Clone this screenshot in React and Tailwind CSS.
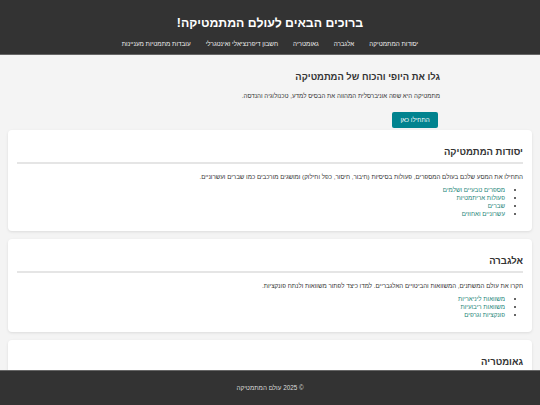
const sections = [
  {
    title: "יסודות המתמטיקה",
    text: "התחילו את המסע שלכם בעולם המספרים, פעולות בסיסיות (חיבור, חיסור, כפל וחילוק) ומושגים מורכבים כמו שברים ועשרוניים.",
    links: ["מספרים טבעיים ושלמים", "פעולות אריתמטיות", "שברים", "עשרוניים ואחוזים"],
  },
  {
    title: "אלגברה",
    text: "חקרו את עולם המשתנים, המשוואות והביטויים האלגבריים. למדו כיצד לפתור משוואות ולנתח פונקציות.",
    links: ["משוואות ליניאריות", "משוואות ריבועיות", "פונקציות וגרפים"],
  },
  {
    title: "גאומטריה",
    text: "גלו את עולם הצורות, הזוויות והמרחב.",
    links: ["משולשים", "מעגלים"],
  },
];

const nav = [
  "יסודות המתמטיקה",
  "אלגברה",
  "גאומטריה",
  "חשבון דיפרנציאלי ואינטגרלי",
  "עובדות מתמטיות מעניינות",
];

export default function App() {
  return (
    <div
      dir="rtl"
      className="min-h-screen bg-[#f4f4f4] text-[#333] font-['Liberation_Sans',Arial,sans-serif]"
    >
      <header className="bg-[#333] text-white border-b border-[#666] h-[55px] flex flex-col items-center">
        <h1 className="text-[12.3px] font-bold leading-[16px] mt-[15px]">ברוכים הבאים לעולם המתמטיקה!</h1>
        <nav className="flex gap-[15px] mt-[9px] text-[6.3px] leading-[8px] text-[#eee]">
          {nav.map((n) => (
            <a key={n} href="#">{n}</a>
          ))}
        </nav>
      </header>

      <section className="px-[100px] pt-[16px] pb-[1px]">
        <h2 className="text-[9.4px] font-bold leading-[12px]">גלו את היופי והכוח של המתמטיקה</h2>
        <p className="text-[6.2px] leading-[8px] mt-[9px]">
          מתמטיקה היא שפה אוניברסלית המהווה את הבסיס למדע, טכנולוגיה והנדסה.
        </p>
        <button className="mt-[12px] mr-[2px] bg-[#00838f] text-white text-[6.2px] w-[46px] h-[16px] rounded-[2px]">
          התחילו כאן
        </button>
      </section>

      <main className="px-[8px] flex flex-col gap-[8px] pb-[40px]">
        {sections.map((s) => (
          <div key={s.title} className="bg-white rounded-[4px] shadow-[0_1px_3px_rgba(0,0,0,0.1)] px-[9px] pt-[16px] pb-[13px]">
            <h2 className="text-[9.5px] font-bold leading-[12px] pb-[4px] border-b-2 border-[#e5e5e5]">{s.title}</h2>
            <p className="text-[6.2px] leading-[8px] mt-[9px]">{s.text}</p>
            <ul className="list-disc pr-[18px] mt-[5px] text-[6.2px] leading-[8px] marker:text-[#333]">
              {s.links.map((l) => (
                <li key={l}>
                  <a href="#" className="text-[#1a8577]">{l}</a>
                </li>
              ))}
            </ul>
          </div>
        ))}
      </main>

      <footer className="fixed bottom-0 left-0 right-0 h-[35px] bg-[#333] border-t border-[#666] flex items-center justify-center text-[6.3px] text-[#ddd]">
        © 2025 עולם המתמטיקה
      </footer>
    </div>
  );
}
